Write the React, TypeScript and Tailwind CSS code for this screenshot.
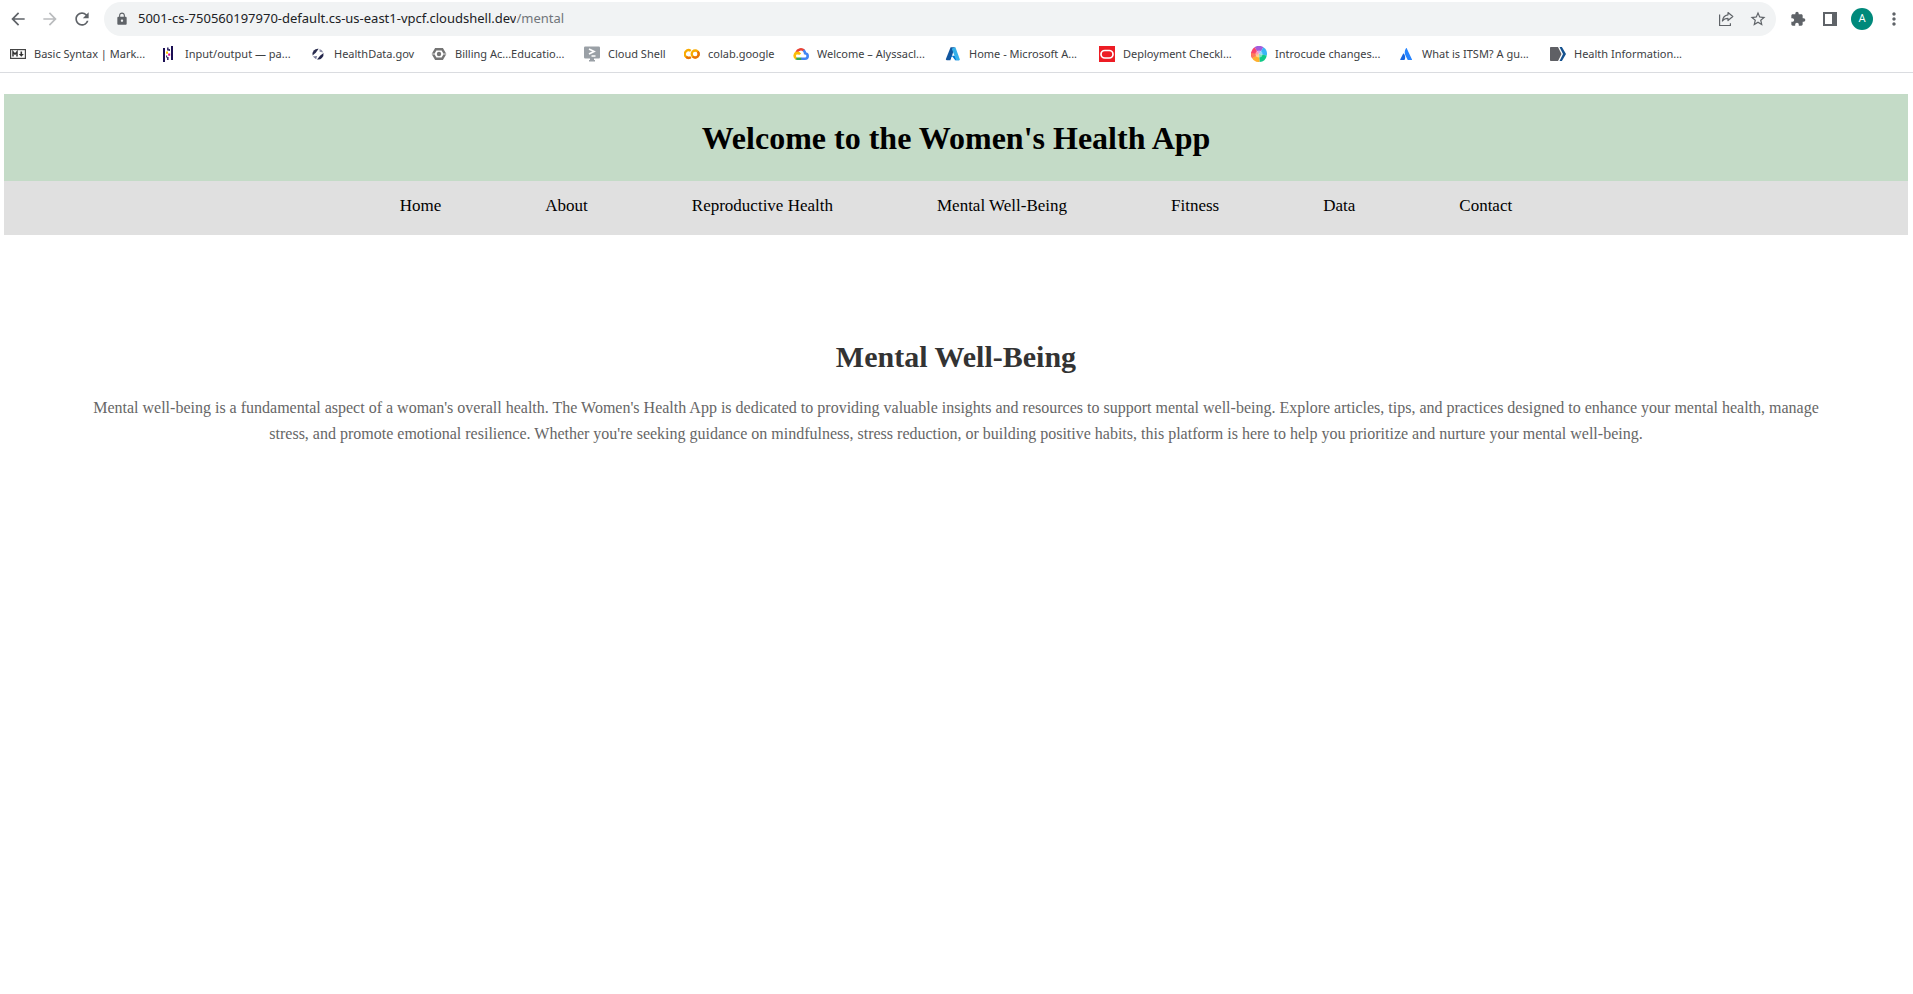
import type { ReactNode } from "react";
import {
  MdArrowBack,
  MdArrowForward,
  MdExtension,
  MdLock,
  MdMoreVert,
  MdRefresh,
  MdStarOutline,
} from "react-icons/md";

type Bookmark = { label: string; icon: ReactNode; width: string };

const MarkdownIcon = () => (
  <svg viewBox="0 0 16 16" className="size-4">
    <rect x="0.6" y="3.6" width="14.8" height="8.8" fill="#fff" stroke="#444" strokeWidth="1.2" />
    <path d="M3 10.5V5.8l2 2.4 2-2.4v4.7" fill="none" stroke="#333" strokeWidth="1.5" />
    <path d="M11.3 5.5v3" stroke="#333" strokeWidth="1.6" />
    <path d="M8.8 8h5l-2.5 2.8z" fill="#333" />
  </svg>
);

const PandasIcon = () => (
  <svg viewBox="0 0 16 16" className="size-4">
    <path d="M2 2h2v14H2zM10 0h2v14h-2z" fill="#1b0f54" />
    <path d="M6 1.500h1.600v3H6zM6 11h1.600v3H6zM7.600 3h1.400v2H7.600zM5 9.500h1.200v2H5z" fill="#1b0f54" opacity="0.850" />
    <path d="M5 5.500h2v2.200H5z" fill="#ffca00" />
    <path d="M7.200 7.500h2v2.200h-2z" fill="#e70488" />
  </svg>
);

const HealthDataIcon = () => (
  <svg viewBox="0 0 16 16" className="size-4">
    <path d="M2.600 9.600A5.500 5.500 0 0 1 8.600 2.700L5.800 6.800z" fill="#2b2d4f" />
    <path d="M9.500 3a5.500 5.500 0 0 1 3.800 3.500L9.600 5.800z" fill="#8d8fa8" />
    <path d="M13.500 7a5.500 5.500 0 0 1-6.500 6.400L10.300 9.400z" fill="#23254a" />
    <path d="M2.800 10.400l3.400 2.800.8-3.300z" fill="#777a98" />
  </svg>
);

const BillingIcon = () => (
  <svg viewBox="0 0 16 16" className="size-4">
    <path d="M4.800 3.200h6.400L14 8l-2.800 4.800H4.800L2 8z" fill="none" stroke="#757575" strokeWidth="2.400" />
    <circle cx="8" cy="8" r="2.200" fill="#757575" />
    <path d="M0.500 8h3M12.500 8h3" stroke="#fff" strokeWidth="0.800" />
  </svg>
);

const CloudShellIcon = () => (
  <svg viewBox="0 0 16 16" className="size-4">
    <path d="M1.200 0.500h13.600A1.200 1.200 0 0 1 16 1.700v9.600a1.200 1.200 0 0 1-1.200 1.200H10V14h1v1.500H5V14h1v-1.500H1.200A1.200 1.200 0 0 1 0 11.300V1.700A1.200 1.200 0 0 1 1.200 0.500z" fill="#9aa0a6" />
    <path d="M5 3l5 2.500L5 8M7.500 10h4" fill="none" stroke="#fff" strokeWidth="1.700" />
  </svg>
);

const ColabIcon = () => (
  <svg viewBox="0 0 16 16" className="size-4" fill="none" strokeWidth="2.300">
    <path d="M6.800 11.100A3.800 3.800 0 1 1 6.800 4.900" stroke="#f9ab00" />
    <circle cx="11.200" cy="8" r="3.500" stroke="#f9ab00" />
    <path d="M13.700 5.500a3.500 3.500 0 0 1-5 5" stroke="#e8710a" />
    <path d="M2.200 10.800a3.800 3.800 0 0 0 4.600.3" stroke="#e8710a" />
  </svg>
);

const GoogleCloudIcon = () => (
  <svg viewBox="0 0 16 16" className="size-4" fill="none" strokeWidth="2.600">
    <path d="M3.600 6.200A4.600 4.600 0 0 1 11 4.500" stroke="#ea4335" />
    <path d="M10.500 4.200c1 .8 1.500 1.800 1.600 3 1.500.2 2.600 1.300 2.600 2.700a2.800 2.800 0 0 1-2.800 2.800H8" stroke="#4285f4" />
    <path d="M8.200 12.700H4.500c-.6 0-1.200-.2-1.600-.5" stroke="#34a853" />
    <path d="M3.300 12.400a2.900 2.900 0 0 1 1.200-5.500c1.200 0 2 .6 2.600 1.500" stroke="#fbbc05" />
  </svg>
);

const AzureIcon = () => (
  <svg viewBox="0 0 16 16" className="size-4">
    <path d="M5.600 1.200h4.200L5.500 14.300H1.800c-.7 0-1.100-.6-.9-1.200z" fill="#11569f" />
    <path d="M12 9.700H5.300l4.300 4.400c.3.200.5.200.8.200h3.700z" fill="#0078d4" />
    <path d="M9.600 1.200h.8l4.400 12.100c.2.500-.2 1-.8 1h-3.900c.6 0 .9-.5.700-1L6.800 2.800z" fill="#36b1ea" />
    <path d="M5.500 14.300l1.700-4 3 4z" fill="#fff" />
  </svg>
);

const OracleIcon = () => (
  <svg viewBox="0 0 16 16" className="size-4">
    <path d="M0 0h16v16H0z" fill="#ed1c24" />
    <rect x="2" y="4.500" width="12" height="7.500" rx="3.750" fill="none" stroke="#fff" strokeWidth="1.700" />
  </svg>
);

const ColorWheelIcon = () => (
  <svg viewBox="0 0 16 16" className="size-4">
    <path d="M8 8L3.500 1.300A8 8 0 0 1 12.500 1.300z" fill="#a25ddc" />
    <path d="M8 8l4.500-6.700A8 8 0 0 1 15.800 9.500z" fill="#38b6f5" />
    <path d="M8 8l7.800 1.500A8 8 0 0 1 8.500 16z" fill="#0fc986" />
    <path d="M8 8l.5 8A8 8 0 0 1 1 12z" fill="#ffb02e" />
    <path d="M8 8l-7 4A8 8 0 0 1 3.500 1.300z" fill="#f9426c" />
    <path d="M1 12a8 8 0 0 1-.8-5L8 8z" fill="#ff7a59" />
    <circle cx="8" cy="8" r="3.500" fill="#fff" opacity="0.450" />
  </svg>
);

const AtlassianIcon = () => (
  <svg viewBox="0 0 16 16" className="size-4">
    <path d="M5.700 7.600c-.2-.2-.4-.2-.6.100L2.200 13.500c-.1.300 0 .5.300.5h4c1.400-2.200.6-5-.8-6.400z" fill="#1565e0" />
    <path d="M8 2.300c-1.800 2.800-1.500 5.200-.4 7.500l2 4c.1.200.3.300.5.300h3.600c.3 0 .5-.3.300-.6L8.700 2.300c-.2-.3-.5-.3-.7 0z" fill="#2684ff" />
  </svg>
);

const HealthInfoIcon = () => (
  <svg viewBox="0 0 16 16" className="size-4">
    <path d="M0.800 1h7.200l3.500 7L8 15H0.800a.8.8 0 0 1-.8-.8V1.800a.8.800 0 0 1 .8-.8z" fill="#5f6065" />
    <path d="M9.500 1h2.400L16 8l-4.100 7H9.500l3.500-7z" fill="#15528f" />
  </svg>
);

const bookmarks: Bookmark[] = [
  { label: "Basic Syntax | Mark...", icon: <MarkdownIcon />, width: "w-[151px]" },
  { label: "Input/output — pa...", icon: <PandasIcon />, width: "w-[149px]" },
  { label: "HealthData.gov", icon: <HealthDataIcon />, width: "w-[121px]" },
  { label: "Billing Ac...Educatio...", icon: <BillingIcon />, width: "w-[153px]" },
  { label: "Cloud Shell", icon: <CloudShellIcon />, width: "w-[100px]" },
  { label: "colab.google", icon: <ColabIcon />, width: "w-[109px]" },
  { label: "Welcome – Alyssacl...", icon: <GoogleCloudIcon />, width: "w-[152px]" },
  { label: "Home - Microsoft A...", icon: <AzureIcon />, width: "w-[154px]" },
  { label: "Deployment Checkl...", icon: <OracleIcon />, width: "w-[152px]" },
  { label: "Introcude changes...", icon: <ColorWheelIcon />, width: "w-[147px]" },
  { label: "What is ITSM? A gu...", icon: <AtlassianIcon />, width: "w-[152px]" },
  { label: "Health Information...", icon: <HealthInfoIcon />, width: "w-[152px]" },
];

const links = [
  "Home",
  "About",
  "Reproductive Health",
  "Mental Well-Being",
  "Fitness",
  "Data",
  "Contact",
];

const ShareIcon = () => (
  <svg viewBox="0 0 16 16" className="size-4" fill="none" stroke="#5f6368" strokeWidth="1.200">
    <path d="M1.600 3.500v11h10.800v-2.300" />
    <path d="M10 1.500l4.800 4-4.800 4V7.300c-2.700 0-4.300.8-5.600 2.700.4-3.500 2.400-5.800 5.600-6.200z" strokeLinejoin="round" />
  </svg>
);

const SidePanelIcon = () => (
  <svg viewBox="0 0 14 14" className="size-[14px]">
    <path d="M0 0h14v14H0z" fill="#5f6368" />
    <path d="M2 2h7v10H2z" fill="#fff" />
  </svg>
);

function IconButton({ label, children }: { label: string; children: ReactNode }) {
  return (
    <button type="button" aria-label={label} className="flex size-8 shrink-0 items-center justify-center text-[#5f6368]">
      {children}
    </button>
  );
}

function BrowserBar() {
  return (
    <header className="border-b border-[#dadce0] font-['Noto_Sans','Open_Sans',sans-serif]">
      <div className="flex items-center pt-[2px] pr-[3px] pl-[2px]">
        <IconButton label="Back"><MdArrowBack className="size-5" /></IconButton>
        <IconButton label="Forward"><MdArrowForward className="size-5 text-[#babcbe]" /></IconButton>
        <IconButton label="Reload"><MdRefresh className="size-5" /></IconButton>
        <div className="ml-[6px] flex h-[34px] min-w-0 flex-1 items-center rounded-full bg-[#f1f3f4] pr-[2px] pl-[11px] text-[13px]">
          <MdLock className="size-[14px] shrink-0 text-[#5f6368]" />
          <input
            aria-label="Address"
            defaultValue="5001-cs-750560197970-default.cs-us-east1-vpcf.cloudshell.dev"
            className="ml-[9px] field-sizing-content bg-transparent text-[#202124] outline-none"
          />
          <span className="flex-1 text-[#70757a]">/mental</span>
          <IconButton label="Share"><ShareIcon /></IconButton>
          <IconButton label="Bookmark this page"><MdStarOutline className="size-[18px]" /></IconButton>
        </div>
        <div className="ml-[6px] flex">
          <IconButton label="Extensions"><MdExtension className="size-4" /></IconButton>
          <IconButton label="Side panel"><SidePanelIcon /></IconButton>
          <IconButton label="Profile">
            <span className="flex size-[22px] items-center justify-center rounded-full bg-[#00897b] font-[Roboto,sans-serif] text-[11px] text-white">A</span>
          </IconButton>
          <IconButton label="Menu"><MdMoreVert className="size-5" /></IconButton>
        </div>
      </div>
      <nav aria-label="Bookmarks" className="flex h-9 items-center overflow-hidden pl-[10px]">
        {bookmarks.map((b) => (
          <a key={b.label} href="#" className={`flex shrink-0 items-center gap-2 text-[11px] whitespace-nowrap text-[#3c4043] ${b.width}`}>
            {b.icon}
            {b.label}
          </a>
        ))}
      </nav>
    </header>
  );
}

export default function App() {
  return (
    <div className="min-h-screen bg-white">
      <BrowserBar />
      <main className="mt-[21px] mr-[5px] ml-1 text-center font-['Liberation_Serif',serif]">
        <h1 className="bg-[#c4dbc7] pt-[25px] pb-[23px] text-[32px] leading-[39px] font-bold text-black">
          Welcome to the Women's Health App
        </h1>
        <nav aria-label="Main" className="flex flex-wrap justify-center gap-x-[104px] bg-[#e0e0e0] pt-[14px] pb-[18px] text-[17px] leading-[22px] text-black">
          {links.map((l) => (
            <a key={l} href="#">{l}</a>
          ))}
        </nav>
        <section className="px-20 pt-[104px]">
          <h2 className="text-[30px] leading-9 font-bold text-[#333]">Mental Well-Being</h2>
          <p className="mt-5 text-base leading-[26px] text-[#666]">
            Mental well-being is a fundamental aspect of a woman's overall health. The Women's Health App is dedicated to
            providing valuable insights and resources to support mental well-being. Explore articles, tips, and practices
            designed to enhance your mental health, manage stress, and promote emotional resilience. Whether you're
            seeking guidance on mindfulness, stress reduction, or building positive habits, this platform is here to help
            you prioritize and nurture your mental well-being.
          </p>
        </section>
      </main>
    </div>
  );
}
